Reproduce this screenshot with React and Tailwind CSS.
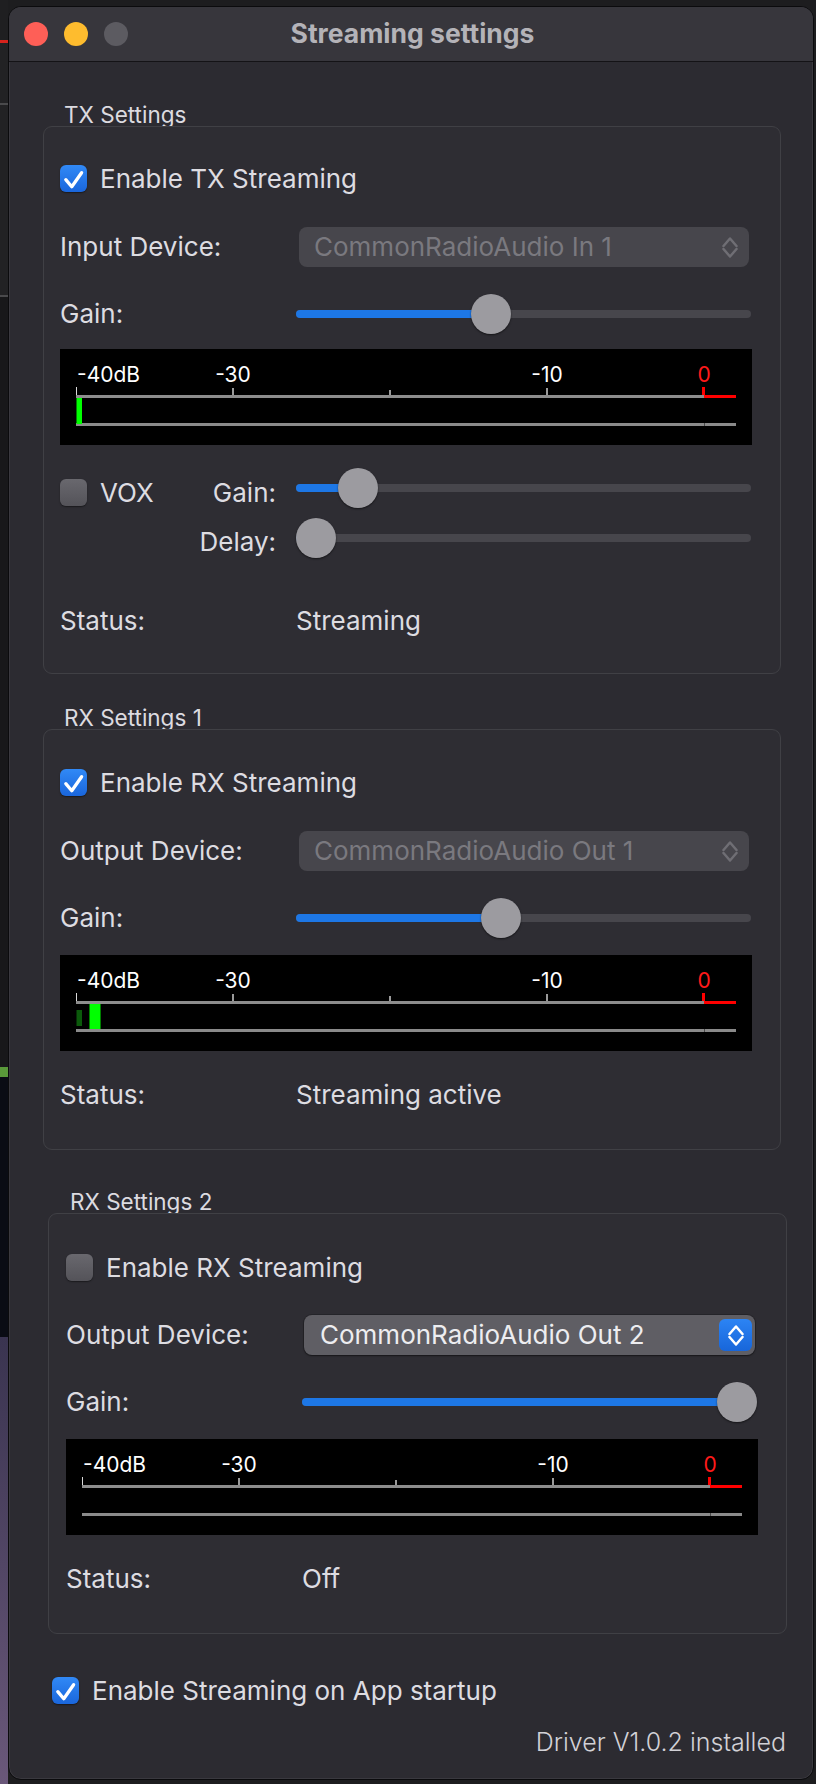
import React from "react";

const LABEL = "text-[26px] leading-[30px] text-[#dddce1] whitespace-nowrap";

function Check({ on }) {
  return on ? (
    <div className="flex h-[27px] w-[27px] shrink-0 items-center justify-center rounded-[6px] bg-linear-to-b from-[#3189f6] to-[#1a66dc] shadow-[0_1px_1.5px_rgba(0,0,0,0.45)]">
      <svg viewBox="0 0 28 28" className="h-[27px] w-[27px]">
        <path
          d="M6 15.2 L12.2 22.6 L22.4 8"
          fill="none"
          stroke="#ffffff"
          strokeWidth="3.4"
          strokeLinecap="round"
          strokeLinejoin="round"
        />
      </svg>
    </div>
  ) : (
    <div className="h-[27px] w-[27px] shrink-0 rounded-[6px] bg-linear-to-b from-[#69686e] to-[#545359] shadow-[0_1px_1.5px_rgba(0,0,0,0.45)]" />
  );
}

function UpDown({ color }) {
  return (
    <svg viewBox="0 0 16 23" className="h-[23px] w-[16px]">
      <path
        d="M1.5 10 L8 2.5 L14.5 10 M1.5 13 L8 20.5 L14.5 13"
        fill="none"
        stroke={color}
        strokeWidth="2.5"
        strokeLinecap="round"
        strokeLinejoin="round"
      />
    </svg>
  );
}

function Popup({ text, enabled }) {
  if (enabled) {
    return (
      <div className="ml-[2px] flex h-[40px] w-[451px] items-center justify-between rounded-[8px] bg-[#5f5e64] pl-[16px] pr-[3px] shadow-[0_0_0_1px_rgba(0,0,0,0.18),0_1px_2px_rgba(0,0,0,0.4)]">
        <span className="text-[26px] leading-[30px] text-[#ededf0]">{text}</span>
        <div className="flex h-[32px] w-[33px] items-center justify-center rounded-[6px] bg-linear-to-b from-[#2c84f4] to-[#1866da]">
          <UpDown color="#ffffff" />
        </div>
      </div>
    );
  }
  return (
    <div className="ml-[3px] flex h-[40px] w-[450px] items-center justify-between rounded-[8px] bg-[#47464c] pl-[15px] pr-[11px]">
      <span className="text-[26px] leading-[30px] text-[#7a797f]">{text}</span>
      <UpDown color="#6f6e74" />
    </div>
  );
}

function Slider({ value }) {
  // thumb centre along a 455px track, thumb is 40px wide
  const centre = 20 + value * 415;
  return (
    <div className="relative flex h-[40px] w-[455px] items-center">
      <div className="h-[8px] w-full overflow-hidden rounded-full bg-[#47464c]">
        <div className="h-full bg-[#1d77e6]" style={{ width: centre }} />
      </div>
      <div
        className="absolute top-0 h-[40px] w-[40px] rounded-full bg-[#9c9ba0] shadow-[0_1px_2px_rgba(0,0,0,0.55)]"
        style={{ left: centre - 20 }}
      />
    </div>
  );
}

function Meter({ children }) {
  return (
    <div className="h-[96px] w-[692px] bg-black">
      <svg width="692" height="96" viewBox="0 0 692 96" className="block">
        <g fontFamily="Inter, 'Noto Sans', sans-serif" fontSize="21" fill="#ffffff">
          <text x="17" y="33">-40dB</text>
          <text x="173" y="33" textAnchor="middle">-30</text>
          <text x="487" y="33" textAnchor="middle">-10</text>
          <text x="644" y="33" textAnchor="middle" fill="#ff1a1a">0</text>
        </g>
        {/* upper scale */}
        <rect x="16" y="46" width="628" height="3" fill="#8d8d8d" />
        <rect x="644" y="46" width="32" height="3" fill="#ff0000" />
        <rect x="16" y="38" width="1" height="8" fill="#d8d8d8" />
        <rect x="172" y="39" width="2" height="7" fill="#9a9a9a" />
        <rect x="329" y="41" width="2" height="5" fill="#9a9a9a" />
        <rect x="486" y="39" width="2" height="7" fill="#9a9a9a" />
        <rect x="642" y="38" width="3" height="8" fill="#ff0000" />
        {/* lower rail */}
        <rect x="16" y="74" width="660" height="3" fill="#8a8a8a" />
        <rect x="644" y="74" width="1" height="3" fill="#4a4a4a" />
        {children}
      </svg>
    </div>
  );
}

function Row({ label, className, children }) {
  return (
    <div className={"flex items-center " + (className || "")}>
      <div className={"w-[236px] shrink-0 " + LABEL}>{label}</div>
      {children}
    </div>
  );
}

function CheckRow({ on, label, className }) {
  return (
    <div className={"flex h-[27px] items-center gap-[13px] " + (className || "")}>
      <Check on={on} />
      <span className={LABEL}>{label}</span>
    </div>
  );
}

function GroupLabel({ text, className }) {
  return (
    <div className={"text-[22.5px] leading-[23px] text-[#dcdbe0] " + className}>{text}</div>
  );
}

export default function App() {
  return (
    <div className="flex h-[1784px] w-[816px] overflow-hidden bg-[#1d1d1f] font-[family-name:Inter,'Noto_Sans',sans-serif]">
      {/* sliver of the app behind the window */}
      <div className="flex w-[8px] shrink-0 flex-col">
        <div className="h-[40px] bg-[#1f1f21]" />
        <div className="h-[3px] bg-[#d8231d]" />
        <div className="h-[60px] bg-[#222224]" />
        <div className="h-[2px] bg-[#4a4a4c]" />
        <div className="h-[190px] bg-[#222224]" />
        <div className="h-[2px] bg-[#4a4a4c]" />
        <div className="h-[770px] bg-[#18181a]" />
        <div className="h-[10px] bg-[#5a9a3a]" />
        <div className="h-[260px] bg-[#0a0c14]" />
        <div className="flex-1 bg-linear-to-b from-[#3a3450] to-[#6a587a]" />
      </div>

      {/* window */}
      <div className="mt-[6px] flex h-[1774px] w-[806px] shrink-0 flex-col overflow-hidden rounded-[13px] border border-[#0b0b0d] bg-[#2c2b31] shadow-[inset_0_0_0_1px_rgba(255,255,255,0.07)]">
        {/* title bar */}
        <div className="relative flex h-[55px] shrink-0 items-center border-b border-[#141316] bg-[#37363c] pl-[15px]">
          <div className="flex gap-[16px]">
            <div className="h-[24px] w-[24px] rounded-full bg-[#fe5f57]" />
            <div className="h-[24px] w-[24px] rounded-full bg-[#febc2e]" />
            <div className="h-[24px] w-[24px] rounded-full bg-[#5c5b61]" />
          </div>
          <div className="absolute inset-0 flex items-center justify-center pl-[3px] text-[26.5px] font-bold text-[#b4b3b8]">
            Streaming settings
          </div>
        </div>

        {/* TX */}
        <GroupLabel text="TX Settings" className="ml-[55px] mt-[41px]" />
        <div className="ml-[34px] w-[738px] rounded-[9px] border border-[#404045] bg-[#2e2d33] pb-[37px] pl-[16px] pr-[28px] pt-[38px]">
          <CheckRow on label="Enable TX Streaming" />
          <Row label="Input Device:" className="mt-[35px]">
            <Popup text="CommonRadioAudio In 1" />
          </Row>
          <Row label="Gain:" className="mt-[27px]">
            <Slider value={0.4217} />
          </Row>
          <div className="mt-[15px]">
            <Meter>
              <rect x="16.5" y="49" width="5.5" height="26" fill="#00ff00" />
            </Meter>
          </div>
          <div className="mt-[23px] flex h-[40px]">
            <div className="mt-[11px] flex h-[27px] w-[236px] shrink-0 items-center">
              <Check on={false} />
              <span className={"ml-[13px] " + LABEL}>VOX</span>
              <span className={"ml-auto pr-[20px] " + LABEL}>Gain:</span>
            </div>
            <Slider value={0.1} />
          </div>
          <div className="mt-[10px] flex h-[40px]">
            <div className={"mt-[9px] w-[236px] shrink-0 pr-[20px] text-right " + LABEL}>Delay:</div>
            <Slider value={0} />
          </div>
          <Row label="Status:" className="mt-[48px]">
            <span className={LABEL}>Streaming</span>
          </Row>
        </div>

        {/* RX 1 */}
        <GroupLabel text="RX Settings 1" className="ml-[55px] mt-[32px]" />
        <div className="ml-[34px] w-[738px] rounded-[9px] border border-[#404045] bg-[#2e2d33] pb-[39px] pl-[16px] pr-[28px] pt-[39px]">
          <CheckRow on label="Enable RX Streaming" />
          <Row label="Output Device:" className="mt-[35px]">
            <Popup text="CommonRadioAudio Out 1" />
          </Row>
          <Row label="Gain:" className="mt-[27px]">
            <Slider value={0.4458} />
          </Row>
          <div className="mt-[17px]">
            <Meter>
              <rect x="16.5" y="55" width="5.5" height="16" fill="#0b5a0b" />
              <rect x="29.5" y="49" width="11" height="25" fill="#00ff00" />
            </Meter>
          </div>
          <Row label="Status:" className="mt-[29px]">
            <span className={LABEL}>Streaming active</span>
          </Row>
        </div>

        {/* RX 2 */}
        <GroupLabel text="RX Settings 2" className="ml-[61px] mt-[40px]" />
        <div className="ml-[39px] w-[739px] rounded-[9px] border border-[#404045] bg-[#2e2d33] pb-[39px] pl-[17px] pr-[28px] pt-[40px]">
          <CheckRow on={false} label="Enable RX Streaming" />
          <Row label="Output Device:" className="mt-[34px]">
            <Popup text="CommonRadioAudio Out 2" enabled />
          </Row>
          <Row label="Gain:" className="mt-[27px]">
            <Slider value={1} />
          </Row>
          <div className="mt-[17px]">
            <Meter />
          </div>
          <Row label="Status:" className="mt-[29px]">
            <span className={LABEL}>Off</span>
          </Row>
        </div>

        <CheckRow on label="Enable Streaming on App startup" className="ml-[43px] mt-[43px]" />
        <div className="mr-[27px] mt-[23px] text-right text-[25px] font-light leading-[30px] text-[#d2d1d6]">
          Driver V1.0.2 installed
        </div>
      </div>
    </div>
  );
}
